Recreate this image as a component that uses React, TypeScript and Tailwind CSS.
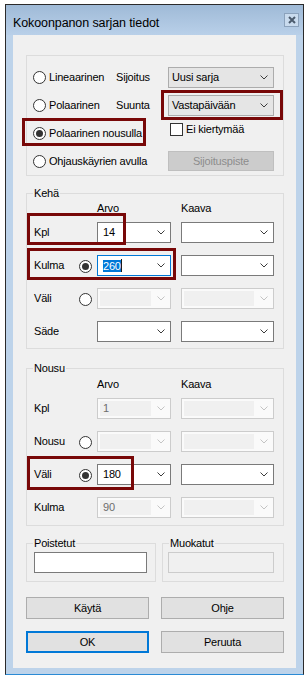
import React from 'react';

const redBox = 'absolute border-[3px] border-[#780808] pointer-events-none';

function Chevron({ className = '' }: { className?: string }) {
  return (
    <svg width="8" height="5" viewBox="0 0 8 5" className={`shrink-0 ${className}`}>
      <polyline points="0.5,0.5 4,4 7.5,0.5" fill="none" stroke="currentColor" strokeWidth="1" />
    </svg>
  );
}

type Kind = 'list' | 'edit' | 'focus' | 'disabled';

function Combo({ kind = 'edit', value = '', className = '' }: { kind?: Kind; value?: string; className?: string }) {
  const frame =
    kind === 'list'
      ? 'bg-[#e5e5e5] border-[#acacac]'
      : kind === 'focus'
        ? 'bg-white border-[#0078d7]'
        : kind === 'disabled'
          ? 'bg-[#fafafa] border-[#cccccc]'
          : 'bg-white border-[#7a7a7a]';

  let body: React.ReactNode;
  if (kind === 'disabled') {
    body = (
      <div className="flex-1 h-[15px] ml-[2px] mr-[6px] bg-[#f0f0f0] text-[#6d6d6d] pl-[3px] flex items-center">
        {value}
      </div>
    );
  } else if (kind === 'focus') {
    body = (
      <div className="flex-1 flex items-center pl-[5px]">
        <span className="bg-[#0078d7] text-white leading-[12px]">{value}</span>
        <span className="w-px h-[13px] bg-[#1a1a1a]" />
      </div>
    );
  } else {
    body = <div className={`flex-1 ${kind === 'list' ? 'pl-[3px]' : 'pl-[5px]'}`}>{value}</div>;
  }

  return (
    <div className={`h-[21px] border flex items-center shrink-0 ${frame} ${className}`}>
      {body}
      <Chevron className={`mr-[5px] ${kind === 'disabled' ? 'text-[#c4c4c4]' : 'text-[#3c3c3c]'}`} />
    </div>
  );
}

function Radio({ checked = false }: { checked?: boolean }) {
  return (
    <span className="w-[13px] h-[13px] rounded-full border border-[#333333] bg-white flex items-center justify-center shrink-0">
      {checked && <span className="w-[7px] h-[7px] rounded-full bg-[#333333]" />}
    </span>
  );
}

function Group({ label, className = '', children }: { label?: string; className?: string; children?: React.ReactNode }) {
  return (
    <div className={`relative border border-[#dcdcdc] ${className}`}>
      {label && (
        <span className="absolute -top-[8px] left-[6px] px-px bg-[#f0f0f0] leading-[14px]">{label}</span>
      )}
      {children}
    </div>
  );
}

function Btn({ label, primary = false }: { label: string; primary?: boolean }) {
  return (
    <div
      className={`h-[22px] flex items-center justify-center bg-[#e1e1e1] ${
        primary ? 'border-2 border-[#0078d7]' : 'border border-[#adadad]'
      }`}
    >
      {label}
    </div>
  );
}

function ValueRow({
  label,
  radio,
  arvo,
  kaava,
  children,
}: {
  label: string;
  radio?: 'on' | 'off';
  arvo: React.ReactNode;
  kaava: React.ReactNode;
  children?: React.ReactNode;
}) {
  return (
    <div className="relative h-[33px] flex items-center pl-[7px]">
      <span className="w-[45px]">{label}</span>
      <span className="w-[13px] flex items-center pt-[2px]">{radio && <Radio checked={radio === 'on'} />}</span>
      <div className="ml-[5px]">{arvo}</div>
      <div className="ml-[10px]">{kaava}</div>
      {children}
    </div>
  );
}

function Header() {
  return (
    <div className="h-[16px] flex items-center pl-[70px]">
      <span className="w-[84px]">Arvo</span>
      <span>Kaava</span>
    </div>
  );
}

export default function App() {
  return (
    <div className="w-[307px] h-[676px] bg-white pt-[4px] pl-[5px] font-['Liberation_Sans',Arial,sans-serif] text-[11px] tracking-[-0.2px] text-black">
      <div className="w-[299px] h-[671px] border border-[#2b2b2b] border-b-[#2a8ad4] bg-[#bdd3ea] flex flex-col">
        {/* title bar */}
        <div className="h-[30px] shrink-0 bg-gradient-to-b from-[#9fbad7] to-[#b9d0e9] flex items-start justify-between pl-[7px] pr-[4px]">
          <span className="mt-[11px] text-[12.5px] leading-[14px] tracking-[-0.1px]">Kokoonpanon sarjan tiedot</span>
          <span className="mt-[8px] w-[15px] h-[14px] border border-[#8ba2bc] bg-[#c9dbee] flex items-center justify-center">
            <svg width="8" height="8" viewBox="0 0 8 8">
              <path d="M1 1 L7 7 M7 1 L1 7" stroke="#4b5b6d" strokeWidth="2" />
            </svg>
          </span>
        </div>

        {/* client area */}
        <div className="ml-[7px] w-[283px] h-[633px] bg-[#f0f0f0] pl-[13px] pt-[20px]">
          <Group className="w-[258px] h-[121px] pt-[7px]">
            <div className="h-[28px] flex items-center pl-[6px]">
              <div className="w-[83px] flex items-center gap-[3px]">
                <Radio />
                <span>Lineaarinen</span>
              </div>
              <span className="w-[52px]">Sijoitus</span>
              <Combo kind="list" value="Uusi sarja" className="w-[106px]" />
            </div>
            <div className="h-[28px] flex items-center pl-[6px]">
              <div className="w-[83px] flex items-center gap-[3px]">
                <Radio />
                <span>Polaarinen</span>
              </div>
              <span className="w-[52px]">Suunta</span>
              <div className="relative">
                <Combo kind="list" value="Vastapäivään" className="w-[106px]" />
                <span className={`${redBox} -left-[7px] -right-[9px] -top-[5px] -bottom-[4px]`} />
              </div>
            </div>
            <div className="h-[28px] flex items-center pl-[6px]">
              <div className="relative h-full w-[135px] flex items-center gap-[3px]">
                <Radio checked />
                <span>Polaarinen nousulla</span>
                <span className={`${redBox} -left-[11px] -top-[1px] w-[124px] h-[28px]`} />
              </div>
              <div className="self-start mt-[4px] ml-[2px] flex items-center gap-[3px]">
                <span className="w-[13px] h-[13px] border border-[#333333] bg-white" />
                <span className="leading-[13px]">Ei kiertymää</span>
              </div>
            </div>
            <div className="h-[28px] flex items-center pl-[6px]">
              <div className="w-[135px] flex items-center gap-[3px]">
                <Radio />
                <span>Ohjauskäyrien avulla</span>
              </div>
              <div className="w-[106px] h-[20px] bg-[#cccccc] border border-[#bfbfbf] text-[#8d8d8d] flex items-center justify-center">
                Sijoituspiste
              </div>
            </div>
          </Group>

          <Group label="Kehä" className="mt-[17px] w-[258px] h-[156px] pt-[6px]">
            <Header />
            <ValueRow label="Kpl" arvo={<Combo value="14" className="w-[74px]" />} kaava={<Combo className="w-[93px]" />}>
              <span className={`${redBox} left-0 -top-[3px] w-[99px] h-[32px]`} />
            </ValueRow>
            <ValueRow
              label="Kulma"
              radio="on"
              arvo={<Combo kind="focus" value="260" className="w-[74px]" />}
              kaava={<Combo className="w-[93px]" />}
            >
              <span className={`${redBox} left-0 -top-[1px] w-[149px] h-[32px]`} />
            </ValueRow>
            <ValueRow
              label="Väli"
              radio="off"
              arvo={<Combo kind="disabled" className="w-[74px]" />}
              kaava={<Combo kind="disabled" className="w-[93px]" />}
            />
            <ValueRow label="Säde" arvo={<Combo className="w-[74px]" />} kaava={<Combo className="w-[93px]" />} />
          </Group>

          <Group label="Nousu" className="mt-[19px] w-[258px] h-[158px] pt-[7px]">
            <Header />
            <ValueRow
              label="Kpl"
              arvo={<Combo kind="disabled" value="1" className="w-[74px]" />}
              kaava={<Combo kind="disabled" className="w-[93px]" />}
            />
            <ValueRow
              label="Nousu"
              radio="off"
              arvo={<Combo kind="disabled" className="w-[74px]" />}
              kaava={<Combo kind="disabled" className="w-[93px]" />}
            />
            <ValueRow label="Väli" radio="on" arvo={<Combo value="180" className="w-[74px]" />} kaava={<Combo className="w-[93px]" />}>
              <span className={`${redBox} left-0 -top-[2px] w-[107px] h-[34px]`} />
            </ValueRow>
            <ValueRow
              label="Kulma"
              arvo={<Combo kind="disabled" value="90" className="w-[74px]" />}
              kaava={<Combo kind="disabled" className="w-[93px]" />}
            />
          </Group>

          <div className="mt-[17px] flex gap-[6px]">
            <Group label="Poistetut" className="w-[130px] h-[39px] pt-[8px] pl-[7px]">
              <div className="w-[113px] h-[21px] border border-[#7a7a7a] bg-white" />
            </Group>
            <Group label="Muokatut" className="w-[122px] h-[39px] pt-[8px] pl-[5px]">
              <div className="w-[106px] h-[21px] border border-[#cccccc] bg-[#f0f0f0]" />
            </Group>
          </div>

          <div className="mt-[15px] w-[258px] grid grid-cols-2 gap-x-[12px] gap-y-[12px]">
            <Btn label="Käytä" />
            <Btn label="Ohje" />
            <Btn label="OK" primary />
            <Btn label="Peruuta" />
          </div>
        </div>
      </div>
    </div>
  );
}
